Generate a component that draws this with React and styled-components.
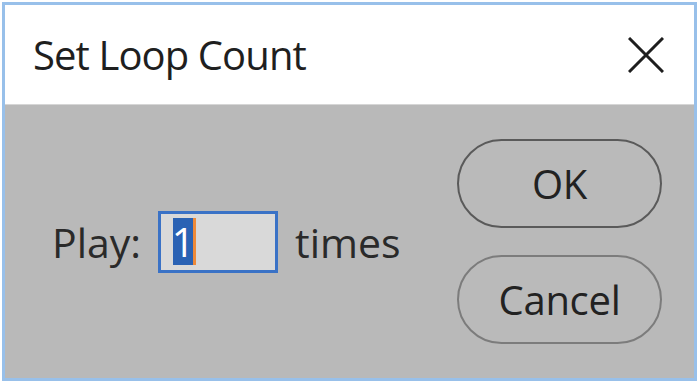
import React from 'react';
import styled, { createGlobalStyle } from 'styled-components';

const GlobalStyle = createGlobalStyle`
  html, body {
    margin: 0;
    padding: 0;
    background: #ffffff;
  }
  body {
    font-family: "Open Sans", "Noto Sans", "Liberation Sans", sans-serif;
  }
`;

const Window = styled.div`
  margin: 2px 3px 2px 2px;
  border: 3px solid #98c0ea;
  box-sizing: border-box;
  height: 379px;
  display: flex;
  flex-direction: column;
  background: #b9b9b9;
`;

const TitleBar = styled.div`
  height: 99px;
  flex-shrink: 0;
  background: #ffffff;
  border-bottom: 1px solid #d6d6d6;
  display: flex;
  align-items: center;
  justify-content: space-between;
  padding: 0 30px 0 28px;
`;

const Title = styled.h1`
  margin: 0;
  font-size: 40px;
  font-weight: 400;
  color: #1f1f1f;
  letter-spacing: -0.9px;
`;

const CloseButton = styled.button`
  border: 0;
  background: transparent;
  padding: 0;
  width: 36px;
  height: 36px;
  display: flex;
  cursor: pointer;
`;

const Body = styled.div`
  flex: 1;
  display: flex;
  align-items: center;
  padding: 0 32px 0 47px;
`;

const PlayRow = styled.div`
  display: flex;
  align-items: center;
  gap: 17px;
`;

const Label = styled.span`
  font-size: 41px;
  color: #2a2a2a;
`;

const Field = styled.div`
  width: 120px;
  height: 62px;
  box-sizing: border-box;
  border: 3px solid #3a72c6;
  background: #d9d9d9;
  display: flex;
  align-items: center;
  padding-left: 12px;
`;

const Selection = styled.span`
  background: #2a62b4;
  color: #ffffff;
  font-size: 40px;
  height: 47px;
  width: 20px;
  display: flex;
  align-items: center;
  justify-content: center;
`;

const Caret = styled.span`
  width: 3px;
  height: 47px;
  background: #ee8a3a;
`;

const ButtonColumn = styled.div`
  margin-left: auto;
  display: flex;
  flex-direction: column;
  gap: 27px;
`;

const PillButton = styled.button`
  width: 205px;
  height: 89px;
  border-radius: 45px;
  border: 2px solid ${(p) => (p.$primary ? '#5a5a5a' : '#7c7c7c')};
  background: #bababa;
  font-family: inherit;
  font-size: 40px;
  color: #222222;
  letter-spacing: -0.3px;
  cursor: pointer;
`;

export default function App() {
  return (
    <>
      <GlobalStyle />
      <Window>
        <TitleBar>
          <Title>Set Loop Count</Title>
          <CloseButton aria-label="Close">
            <svg width="36" height="36" viewBox="0 0 36 36">
              <path d="M1 1 L35 35 M35 1 L1 35" stroke="#1e1e1e" strokeWidth="3" />
            </svg>
          </CloseButton>
        </TitleBar>
        <Body>
          <PlayRow>
            <Label>Play:</Label>
            <Field>
              <Selection>1</Selection>
              <Caret />
            </Field>
            <Label>times</Label>
          </PlayRow>
          <ButtonColumn>
            <PillButton $primary>OK</PillButton>
            <PillButton>Cancel</PillButton>
          </ButtonColumn>
        </Body>
      </Window>
    </>
  );
}
